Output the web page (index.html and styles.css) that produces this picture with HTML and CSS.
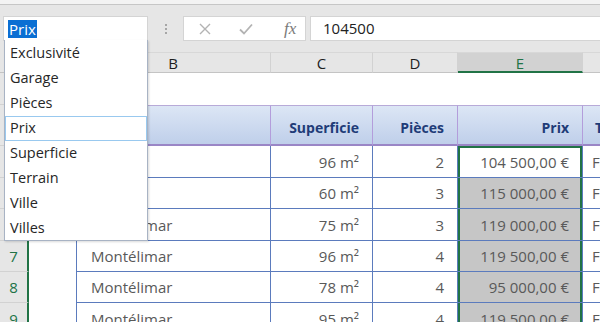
FILE: index.html
```html
<!DOCTYPE html>
<html lang="fr">

<head>
    <meta charset="UTF-8">
    <meta name="viewport" content="width=device-width, initial-scale=1.0">
    <title>Plage nommée Prix</title>
    <link rel="stylesheet" href="styles.css">
</head>

<body>
    <div class="title-strip"></div>

    <div class="formula-bar">
        <div class="name-box"><span class="name-selected">Prix</span></div>
        <div class="grip"><i></i><i></i><i></i></div>
        <div class="fx-buttons">
            <svg class="fx-icon" width="14" height="14" viewBox="0 0 14 14">
                <path d="M2 2 L12 12 M12 2 L2 12" stroke="#b3b3b3" stroke-width="1.4" fill="none" />
            </svg>
            <svg class="fx-icon" width="16" height="14" viewBox="0 0 16 14">
                <path d="M2 7.5 L6 11.5 L14 2.5" stroke="#b3b3b3" stroke-width="1.8" fill="none" />
            </svg>
            <span class="fx-label">fx</span>
        </div>
        <div class="formula-input">104500</div>
    </div>

    <div class="sheet">
        <div class="corner"></div>
        <div class="col-head">A</div>
        <div class="col-head">B</div>
        <div class="col-head">C</div>
        <div class="col-head">D</div>
        <div class="col-head active">E</div>
        <div class="col-head">F</div>

        <div class="row-head">2</div>
        <div class="cell"></div>
        <div class="cell"></div>
        <div class="cell"></div>
        <div class="cell"></div>
        <div class="cell"></div>
        <div class="cell"></div>

        <div class="row-head">3</div>
        <div class="cell"></div>
        <div class="th first text">Ville</div>
        <div class="th">Superficie</div>
        <div class="th">Pièces</div>
        <div class="th">Prix</div>
        <div class="th text f">Terrain</div>

        <div class="row-head sel">4</div>
        <div class="cell"></div>
        <div class="td first text">Nyons</div>
        <div class="td">96 m²</div>
        <div class="td">2</div>
        <div class="td range top current">104 500,00 €</div>
        <div class="td text f">Faux</div>

        <div class="row-head sel">5</div>
        <div class="cell"></div>
        <div class="td first text">Valence</div>
        <div class="td">60 m²</div>
        <div class="td">3</div>
        <div class="td range">115 000,00 €</div>
        <div class="td text f">Faux</div>

        <div class="row-head sel">6</div>
        <div class="cell"></div>
        <div class="td first text">Montélimar</div>
        <div class="td">75 m²</div>
        <div class="td">3</div>
        <div class="td range">119 000,00 €</div>
        <div class="td text f">Faux</div>

        <div class="row-head sel">7</div>
        <div class="cell"></div>
        <div class="td first text">Montélimar</div>
        <div class="td">96 m²</div>
        <div class="td">4</div>
        <div class="td range">119 500,00 €</div>
        <div class="td text f">Faux</div>

        <div class="row-head sel">8</div>
        <div class="cell"></div>
        <div class="td first text">Montélimar</div>
        <div class="td">78 m²</div>
        <div class="td">4</div>
        <div class="td range">95 000,00 €</div>
        <div class="td text f">Faux</div>

        <div class="row-head sel">9</div>
        <div class="cell"></div>
        <div class="td first text">Montélimar</div>
        <div class="td">95 m²</div>
        <div class="td">4</div>
        <div class="td range">119 500,00 €</div>
        <div class="td text f">Faux</div>
    </div>

    <ul class="name-list">
        <li>Exclusivité</li>
        <li>Garage</li>
        <li>Pièces</li>
        <li class="hover">Prix</li>
        <li>Superficie</li>
        <li>Terrain</li>
        <li>Ville</li>
        <li>Villes</li>
    </ul>
</body>

</html>
```

FILE: styles.css
```css
body {
    margin: 0;
    width: 600px;
    height: 322px;
    overflow: hidden;
    position: relative;
    font-family: "Open Sans", sans-serif;
    background-color: #fff;
}

.title-strip {
    height: 4px;
    background-color: #f3f3f3;
    border-bottom: 1px solid #c6c6c6;
}

.formula-bar {
    display: flex;
    align-items: flex-start;
    height: 47px;
    padding: 11px 0 0 3px;
    box-sizing: border-box;
    background-color: #e6e6e6;
}

.name-box {
    width: 145px;
    height: 25px;
    box-sizing: border-box;
    background: #fff;
    border: 1px solid #d4d4d4;
    padding: 1px 0 0 4px;
}

.name-selected {
    display: inline-block;
    background-color: #0a6fd3;
    color: #fff;
    font-size: 15px;
    line-height: 18px;
    padding: 0 1px;
}

.grip {
    width: 35px;
    height: 25px;
    display: flex;
    flex-direction: column;
    align-items: center;
    justify-content: center;
    gap: 2px;
}

.grip i {
    width: 2px;
    height: 2px;
    background-color: #a6a6a6;
}

.fx-buttons {
    width: 123px;
    height: 25px;
    box-sizing: border-box;
    background: #fff;
    border: 1px solid #d4d4d4;
    display: flex;
    align-items: center;
    padding-left: 14px;
    gap: 26px;
}

.fx-label {
    font-family: "Liberation Serif", serif;
    font-style: italic;
    font-size: 17px;
    color: #7a7a7a;
    margin-left: 4px;
}

.formula-input {
    flex: 1;
    margin-left: 4px;
    height: 25px;
    box-sizing: border-box;
    background: #fff;
    border: 1px solid #d4d4d4;
    border-right: none;
    padding-left: 12px;
    font-size: 15px;
    line-height: 23px;
    color: #222;
}

.sheet {
    display: grid;
    width: 760px;
    grid-template-columns: 29px 47px 195px 102px 85px 125px 1fr;
    grid-template-rows: 21px 32px 41px 32px 31px 32px 31px 31px 32px;
    background-color: #fff;
}

.corner,
.col-head {
    background-color: #e6e6e6;
    border-bottom: 1px solid #c4c4c4;
    border-right: 1px solid #d2d2d2;
    box-sizing: border-box;
}

.col-head {
    font-size: 15px;
    line-height: 20px;
    text-align: center;
    color: #1e1e1e;
    border-top: 1px solid #d8d8d8;
}

.col-head.active {
    background-color: #d2d2d2;
    color: #217346;
    border-bottom: 2px solid #217346;
}

.row-head {
    background-color: #e6e6e6;
    border-bottom: 1px solid #d2d2d2;
    border-right: 1px solid #c4c4c4;
    box-sizing: border-box;
    font-size: 15px;
    text-align: center;
    display: flex;
    align-items: center;
    justify-content: center;
    color: #1e1e1e;
}

.row-head.sel {
    color: #217346;
    border-right: 2px solid #217346;
}

.th,
.td {
    box-sizing: border-box;
    display: flex;
    align-items: center;
    justify-content: flex-end;
    white-space: nowrap;
    overflow: hidden;
}

.th {
    background: linear-gradient(#dce6f5, #bfcfea);
    border-top: 1px solid #b8aad8;
    border-right: 1px solid #b39ddb;
    border-bottom: 2px solid #9a86c6;
    padding: 4px 13px 0 0;
    font-size: 14px;
    font-weight: 700;
    color: #1f3c78;
}

.td {
    border-right: 1px solid #5b7bbd;
    border-bottom: 1px solid #5b7bbd;
    padding-right: 13px;
    font-size: 15px;
    color: #595959;
}

.first {
    border-left: 1px solid #5b7bbd;
}

.th.first {
    border-left-color: #b39ddb;
}

.text {
    justify-content: flex-start;
    padding-left: 14px;
}

.td.f {
    padding-left: 9px;
}

.th.f {
    padding-left: 12px;
}

.range {
    background-color: #c6c6c6;
    box-shadow: inset 2px 0 #217346, inset -2px 0 #217346;
}

.range.current {
    background-color: #fff;
}

.range.top {
    box-shadow: inset 2px 0 #217346, inset -2px 0 #217346, inset 0 2px #217346;
}

.name-list {
    position: absolute;
    left: 4px;
    top: 40px;
    width: 144px;
    height: 201px;
    margin: 0;
    padding: 1px 0 0;
    box-sizing: border-box;
    list-style: none;
    background: #fff;
    border: 1px solid #a8b3c4;
    border-top: none;
    box-shadow: 1px 1px 2px rgba(0, 0, 0, 0.15);
}

.name-list li {
    height: 25px;
    box-sizing: border-box;
    padding-left: 5px;
    font-size: 14.5px;
    line-height: 24px;
    color: #262626;
}

.name-list li.hover {
    border: 1px solid #99c9ef;
    padding-left: 4px;
    line-height: 22px;
}
```
